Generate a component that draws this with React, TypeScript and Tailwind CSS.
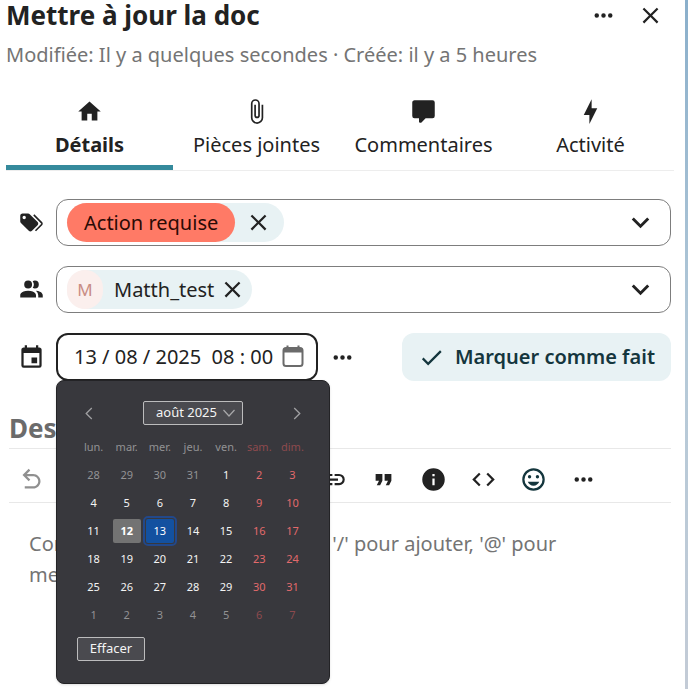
import { useState } from "react";

const icons = {
  dots: "M16,12A2,2 0 0,1 18,10A2,2 0 0,1 20,12A2,2 0 0,1 18,14A2,2 0 0,1 16,12M10,12A2,2 0 0,1 12,10A2,2 0 0,1 14,12A2,2 0 0,1 12,14A2,2 0 0,1 10,12M4,12A2,2 0 0,1 6,10A2,2 0 0,1 8,12A2,2 0 0,1 6,14A2,2 0 0,1 4,12Z",
  close: "M19,6.41L17.59,5L12,10.59L6.41,5L5,6.41L10.59,12L5,17.59L6.41,19L12,13.41L17.59,19L19,17.59L13.41,12L19,6.41Z",
  home: "M10,20V14H14V20H19V12H22L12,3L2,12H5V20H10Z",
  paperclip:
    "M16.5,6V17.5A4,4 0 0,1 12.5,21.5A4,4 0 0,1 8.5,17.5V5A2.5,2.5 0 0,1 11,2.5A2.5,2.5 0 0,1 13.5,5V15.5A1,1 0 0,1 12.5,16.5A1,1 0 0,1 11.5,15.5V6H10V15.5A2.5,2.5 0 0,0 12.5,18A2.5,2.5 0 0,0 15,15.5V5A4,4 0 0,0 11,1A4,4 0 0,0 7,5V17.5A5.5,5.5 0 0,0 12.5,23A5.5,5.5 0 0,0 18,17.5V6H16.5Z",
  comment:
    "M9,22A1,1 0 0,1 8,21V18H4A2,2 0 0,1 2,16V4C2,2.89 2.9,2 4,2H20A2,2 0 0,1 22,4V16A2,2 0 0,1 20,18H13.9L10.2,21.71C10,21.9 9.75,22 9.5,22V22H9Z",
  bolt: "M11 15H6L13 1V9H18L11 23V15Z",
  tags: "M5.5,9A1.5,1.5 0 0,0 7,7.5A1.5,1.5 0 0,0 5.5,6A1.5,1.5 0 0,0 4,7.5A1.5,1.5 0 0,0 5.5,9M17.41,11.58C17.77,11.94 18,12.44 18,13C18,13.55 17.78,14.05 17.41,14.41L12.41,19.41C12.05,19.77 11.55,20 11,20C10.45,20 9.95,19.78 9.58,19.41L2.59,12.42C2.22,12.05 2,11.55 2,11V6C2,4.89 2.89,4 4,4H9C9.55,4 10.05,4.22 10.41,4.58L17.41,11.58M13.54,5.71L14.54,4.71L21.41,11.58C21.78,11.94 22,12.45 22,13C22,13.55 21.78,14.05 21.42,14.41L16.04,19.79L15.04,18.79L20.75,13L13.54,5.71Z",
  people:
    "M16 17V19H2V17S2 13 9 13 16 17 16 17M12.5 7.5A3.5 3.5 0 1 0 9 11A3.5 3.5 0 0 0 12.5 7.5M15.94 13A5.32 5.32 0 0 1 18 17V19H22V17S22 13.37 15.94 13M15 4A3.39 3.39 0 0 0 13.07 4.59A5 5 0 0 1 13.07 10.41A3.39 3.39 0 0 0 15 11A3.5 3.5 0 0 0 15 4Z",
  calendar:
    "M19,19H5V8H19M16,1V3H8V1H6V3H5C3.89,3 3,3.89 3,5V19A2,2 0 0,0 5,21H19A2,2 0 0,0 21,19V5C21,3.89 20.1,3 19,3H18V1M17,12H12V17H17V12Z",
  chevronDown: "M7.41,8.58L12,13.17L16.59,8.58L18,10L12,16L6,10L7.41,8.58Z",
  check: "M21,7L9,19L3.5,13.5L4.91,12.09L9,16.17L19.59,5.59L21,7Z",
  undo: "M20 13.5C20 17.09 17.09 20 13.5 20H6V18H13.5C16 18 18 16 18 13.5S16 9 13.5 9H7.83L10.91 12.09L9.5 13.5L4 8L9.5 2.5L10.92 3.91L7.83 7H13.5C17.09 7 20 9.91 20 13.5Z",
  redo: "M4 13.5C4 17.09 6.91 20 10.5 20H18V18H10.5C8 18 6 16 6 13.5S8 9 10.5 9H16.17L13.09 12.09L14.5 13.5L20 8L14.5 2.5L13.08 3.91L16.17 7H10.5C6.91 7 4 9.91 4 13.5Z",
  bold: "M13.5,15.5H10V12.5H13.5A1.5,1.5 0 0,1 15,14A1.5,1.5 0 0,1 13.5,15.5M10,6.5H13A1.5,1.5 0 0,1 14.5,8A1.5,1.5 0 0,1 13,9.5H10M15.6,10.79C16.57,10.11 17.25,9 17.25,8C17.25,5.74 15.5,4 13.25,4H7V18H14.04C16.14,18 17.75,16.3 17.75,14.21C17.75,12.69 16.89,11.39 15.6,10.79Z",
  italic: "M10,4V7H12.21L8.79,15H6V18H14V15H11.79L15.21,7H18V4H10Z",
  list: "M7,5H21V7H7V5M7,13V11H21V13H7M4,4.5A1.5,1.5 0 0,1 5.5,6A1.5,1.5 0 0,1 4,7.5A1.5,1.5 0 0,1 2.5,6A1.5,1.5 0 0,1 4,4.5M4,10.5A1.5,1.5 0 0,1 5.5,12A1.5,1.5 0 0,1 4,13.5A1.5,1.5 0 0,1 2.5,12A1.5,1.5 0 0,1 4,10.5M7,19V17H21V19H7M4,16.5A1.5,1.5 0 0,1 5.5,18A1.5,1.5 0 0,1 4,19.5A1.5,1.5 0 0,1 2.5,18A1.5,1.5 0 0,1 4,16.5Z",
  heading: "M5,4V7H10.5V19H13.5V7H19V4H5Z",
  link: "M3.9,12C3.9,10.29 5.29,8.9 7,8.9H11V7H7A5,5 0 0,0 2,12A5,5 0 0,0 7,17H11V15.1H7C5.29,15.1 3.9,13.71 3.9,12M8,13H16V11H8V13M17,7H13V8.9H17C18.71,8.9 20.1,10.29 20.1,12C20.1,13.71 18.71,15.1 17,15.1H13V17H17A5,5 0 0,0 22,12A5,5 0 0,0 17,7Z",
  quote: "M14,17H17L19,13V7H13V13H16M6,17H9L11,13V7H5V13H8L6,17Z",
  info: "M13,9H11V7H13M13,17H11V11H13M12,2A10,10 0 0,0 2,12A10,10 0 0,0 12,22A10,10 0 0,0 22,12A10,10 0 0,0 12,2Z",
  code: "M14.6,16.6L19.2,12L14.6,7.4L16,6L22,12L16,18L14.6,16.6M9.4,16.6L4.8,12L9.4,7.4L8,6L2,12L8,18L9.4,16.6Z",
  smile:
    "M12,17.5C14.33,17.5 16.3,16.04 17.11,14H6.89C7.69,16.04 9.67,17.5 12,17.5M8.5,11A1.5,1.5 0 0,0 10,9.5A1.5,1.5 0 0,0 8.5,8A1.5,1.5 0 0,0 7,9.5A1.5,1.5 0 0,0 8.5,11M15.5,11A1.5,1.5 0 0,0 17,9.5A1.5,1.5 0 0,0 15.5,8A1.5,1.5 0 0,0 14,9.5A1.5,1.5 0 0,0 15.5,11M12,20A8,8 0 0,1 4,12A8,8 0 0,1 12,4A8,8 0 0,1 20,12A8,8 0 0,1 12,20M12,2C6.47,2 2,6.5 2,12A10,10 0 0,0 12,22A10,10 0 0,0 22,12A10,10 0 0,0 12,2Z",
};

type IconName = keyof typeof icons;

const Icon: React.FC<{ name: IconName; className?: string }> = ({
  name,
  className = "size-[27px]",
}) => (
  <svg viewBox="0 0 24 24" fill="currentColor" aria-hidden="true" className={`shrink-0 ${className}`}>
    <path d={icons[name]} />
  </svg>
);

const tabs: { label: string; icon: IconName }[] = [
  { label: "Détails", icon: "home" },
  { label: "Pièces jointes", icon: "paperclip" },
  { label: "Commentaires", icon: "comment" },
  { label: "Activité", icon: "bolt" },
];

const history: { label: string; icon: IconName }[] = [
  { label: "Annuler", icon: "undo" },
  { label: "Rétablir", icon: "redo" },
];

const tools: { label: string; icon: IconName }[] = [
  { label: "Gras", icon: "bold" },
  { label: "Italique", icon: "italic" },
  { label: "Titres", icon: "heading" },
  { label: "Listes", icon: "list" },
  { label: "Insérer un lien", icon: "link" },
  { label: "Citation", icon: "quote" },
  { label: "Encadré", icon: "info" },
  { label: "Bloc de code", icon: "code" },
  { label: "Insérer un émoji", icon: "smile" },
  { label: "Plus d'actions", icon: "dots" },
];

const weekdays = ["lun.", "mar.", "mer.", "jeu.", "ven.", "sam.", "dim."];

const weeks = [
  [28, 29, 30, 31, 1, 2, 3],
  [4, 5, 6, 7, 8, 9, 10],
  [11, 12, 13, 14, 15, 16, 17],
  [18, 19, 20, 21, 22, 23, 24],
  [25, 26, 27, 28, 29, 30, 31],
  [1, 2, 3, 4, 5, 6, 7],
];

const TODAY = 12;

const dayClass = (day: number, week: number, col: number, selected: number) => {
  const outside = (week === 0 && day > 20) || (week === 5 && day < 20);
  if (!outside && day === selected)
    return "bg-[#1351a0] text-white outline-2 outline-offset-1 outline-[#22488a]";
  if (!outside && day === TODAY) return "bg-[#737373] font-bold text-white";
  if (col > 4) return outside ? "text-[#8d4a4e]" : "text-[#e26a6c]";
  return outside ? "text-[#929294]" : "text-[#f4f4f4]";
};

const Calendar: React.FC = () => {
  const [selected, setSelected] = useState(13);

  return (
    <div className="absolute top-full left-0 z-10 -mt-px w-[274px] rounded-lg border border-[#232326] bg-[#38383d] px-5 pt-5 pb-[22px] text-[13px] text-[#f4f4f4] shadow-sm">
      <div className="mb-2 flex h-6 items-center justify-between">
        <button aria-label="Mois précédent" className="flex w-6 justify-center text-[#a0a0a2]">
          <svg viewBox="0 0 8 14" className="h-[13px] w-2" fill="none" stroke="currentColor" strokeWidth="1.4">
            <path d="M7 1L1 7L7 13" />
          </svg>
        </button>
        <button className="flex h-6 w-[100px] items-center justify-end gap-[6px] rounded-xs border border-[#bcbcbd] bg-[#4a4a4f] pr-[7px] whitespace-nowrap">
          août 2025
          <svg viewBox="0 0 12 8" className="h-2 w-3" fill="none" stroke="#a8a8aa" strokeWidth="1.2">
            <path d="M0.5 1L6 7L11.5 1" />
          </svg>
        </button>
        <button aria-label="Mois suivant" className="flex w-6 justify-center text-[#a0a0a2]">
          <svg viewBox="0 0 8 14" className="h-[13px] w-2" fill="none" stroke="currentColor" strokeWidth="1.4">
            <path d="M1 1L7 7L1 13" />
          </svg>
        </button>
      </div>
      <table className="w-full table-fixed border-collapse text-center text-[11px]">
        <thead>
          <tr className="h-7">
            {weekdays.map((name, i) => (
              <th
                key={name}
                className={`p-0 font-normal ${i > 4 ? "text-[#8d4a4e]" : "text-[#929294]"}`}
              >
                {name}
              </th>
            ))}
          </tr>
        </thead>
        <tbody>
          {weeks.map((days, week) => (
            <tr key={week} className="h-7">
              {days.map((day, col) => (
                <td key={col} className="p-0">
                  <button
                    onClick={() => setSelected(day)}
                    className={`mx-auto block h-6 w-7 rounded-xs ${dayClass(day, week, col, selected)}`}
                  >
                    {day}
                  </button>
                </td>
              ))}
            </tr>
          ))}
        </tbody>
      </table>
      <button className="mt-2 h-6 w-[68px] rounded-xs border border-[#bcbcbd] bg-[#4a4a4f]">
        Effacer
      </button>
    </div>
  );
};

const ToolButton: React.FC<{ label: string; icon: IconName; className?: string }> = ({
  label,
  icon,
  className = "",
}) => (
  <button aria-label={label} className={`flex size-[45px] shrink-0 items-center justify-center ${className}`}>
    <Icon name={icon} />
  </button>
);

const App: React.FC = () => {
  const [date, setDate] = useState("13 / 08 / 2025  08 : 00");

  return (
    <div className="flex min-h-screen bg-white font-['Noto_Sans',sans-serif] text-[20px] text-[#222222]">
      <main className="min-w-0 flex-1 pr-[11px] pl-[6px]">
        <header>
          <div className="flex h-[30px] items-center">
            <h1 className="flex-1 text-[26px] leading-[30px] font-bold">Mettre à jour la doc</h1>
            <button aria-label="Actions" className="flex w-[47px] justify-center">
              <Icon name="dots" />
            </button>
            <button aria-label="Fermer" className="flex w-[47px] justify-center">
              <Icon name="close" />
            </button>
          </div>
          <p className="mt-[11px] leading-7 whitespace-nowrap text-[#747474]">
            Modifiée: Il y a quelques secondes · Créée: il y a 5 heures
          </p>
        </header>

        <nav role="tablist" className="mt-[29px] grid grid-cols-4 border-b border-[#ededed]">
          {tabs.map((tab, i) => (
            <button
              key={tab.label}
              role="tab"
              aria-selected={i === 0}
              className={`flex h-[72px] flex-col items-center gap-[6px] whitespace-nowrap ${
                i === 0 ? "border-b-5 border-[#358a9c] font-bold" : ""
              }`}
            >
              <Icon name={tab.icon} />
              <span className="leading-7">{tab.label}</span>
            </button>
          ))}
        </nav>

        <div className="mt-7 flex flex-col gap-5 pr-[3px] pl-3">
          <div className="flex items-center gap-[11px]">
            <Icon name="tags" />
            <div className="flex h-[47px] flex-1 items-center rounded-xl border border-[#7d7d7d] px-[10px]">
              <div className="flex h-[39px] items-center rounded-full bg-[#e8f2f4] pr-3">
                <span className="flex h-full items-center rounded-full bg-[#ff7a66] px-[17px] text-[#2a0a05]">
                  Action requise
                </span>
                <button aria-label="Retirer Action requise" className="ml-[10px]">
                  <Icon name="close" />
                </button>
              </div>
              <button aria-label="Choisir une étiquette" className="mr-[2px] ml-auto">
                <Icon name="chevronDown" className="size-[35px]" />
              </button>
            </div>
          </div>

          <div className="flex items-center gap-[11px]">
            <Icon name="people" />
            <div className="flex h-[47px] flex-1 items-center rounded-xl border border-[#7d7d7d] px-[10px]">
              <div className="flex h-[39px] items-center rounded-full bg-[#e8f2f4] pr-[6px]">
                <span className="flex h-full w-9 items-center justify-center rounded-full bg-[#fbefed] text-[17px] text-[#c98d85]">
                  M
                </span>
                <span className="ml-[11px]">Matth_test</span>
                <button aria-label="Retirer Matth_test" className="ml-[5px]">
                  <Icon name="close" />
                </button>
              </div>
              <button aria-label="Choisir un utilisateur" className="mr-[2px] ml-auto">
                <Icon name="chevronDown" className="size-[35px]" />
              </button>
            </div>
          </div>

          <div className="flex items-center gap-[11px]">
            <Icon name="calendar" />
            <div className="relative w-[262px]">
              <div className="flex h-12 items-center rounded-xl border-2 border-[#222222] pr-[11px] pl-4">
                <input
                  type="text"
                  aria-label="Date d'échéance"
                  value={date}
                  onChange={(e) => setDate(e.target.value)}
                  className="w-full min-w-0 flex-1 bg-transparent outline-none"
                />
                <button aria-label="Ouvrir le calendrier" className="text-[#6b6b6b]">
                  <svg viewBox="0 0 24 24" className="size-6" fill="none" stroke="currentColor" strokeWidth="2">
                    <rect x="2.5" y="3" width="19" height="18" rx="2.5" />
                    <path d="M2.5 5.500H21.500" strokeWidth="4" />
                    <path d="M6.500 0.500V4M17.500 0.500V4" />
                  </svg>
                </button>
              </div>
              <Calendar />
            </div>
            <button aria-label="Options de date">
              <Icon name="dots" />
            </button>
            <button className="ml-auto flex h-12 items-center gap-[10px] rounded-xl bg-[#e8f2f4] px-4 font-semibold whitespace-nowrap text-[#14363d]">
              <Icon name="check" />
              Marquer comme fait
            </button>
          </div>
        </div>

        <section className="mt-[30px] px-[3px]">
          <h2 className="mb-[2px] text-[26px] leading-[35px] font-bold text-[#6b6b6b]">
            Description
          </h2>
          <div className="flex h-[55px] items-center overflow-hidden border-y border-[#e8e8e8] pt-[7px]">
            <div className="mr-[7px] flex gap-[5px]">
              {history.map((tool) => (
                <ToolButton key={tool.label} {...tool} className="text-[#909090]" />
              ))}
            </div>
            <div className="flex gap-[5px]">
              {tools.map((tool) => (
                <ToolButton
                  key={tool.label}
                  {...tool}
                  className={tool.icon === "smile" ? "text-[#14363d]" : ""}
                />
              ))}
            </div>
          </div>
          <textarea
            aria-label="Description"
            rows={4}
            placeholder="Commencez à écrire ou essayez '/' pour ajouter, '@' pour mentionner…"
            className="mt-[25px] block w-full resize-none px-5 leading-[31px] outline-none placeholder:text-[#747474]"
          />
        </section>
      </main>
      <div className="w-[3px] bg-linear-to-b from-[#8aafcb] via-[#b4c9d8] to-[#c3cbd6]" />
    </div>
  );
};

export default App;
